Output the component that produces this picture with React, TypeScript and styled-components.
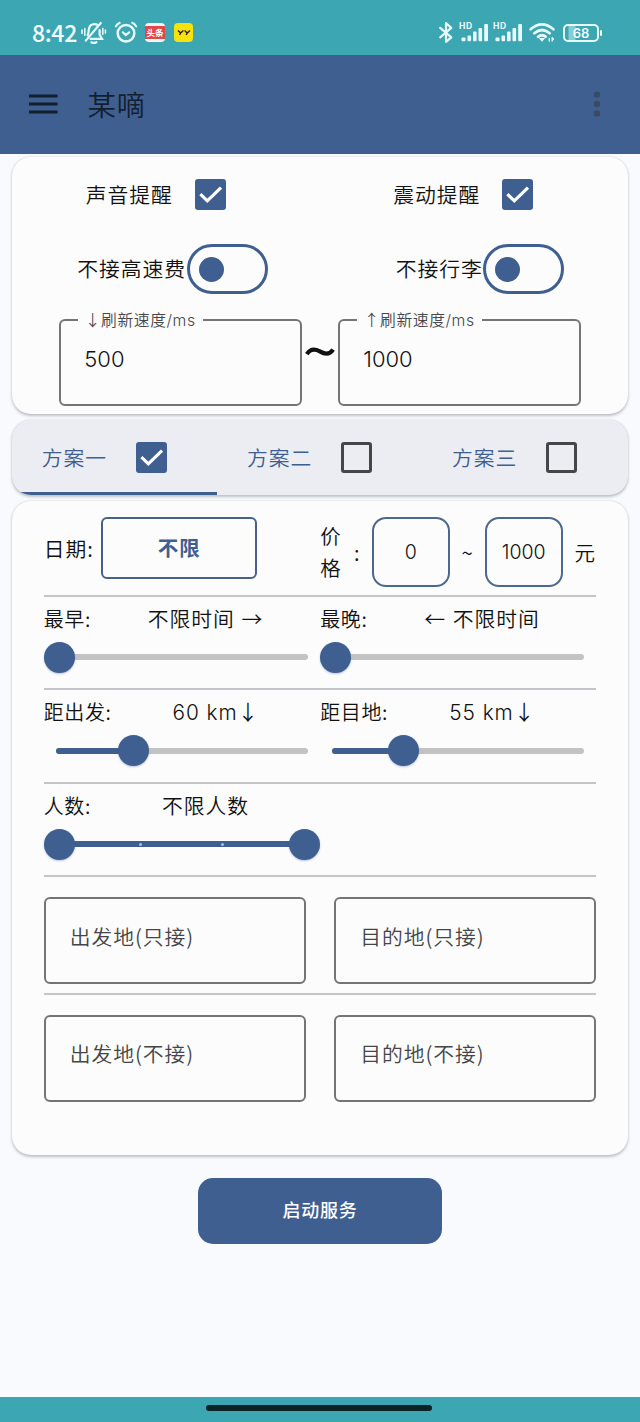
import React from "react";
import styled, { createGlobalStyle, css } from "styled-components";

const blue = "#3e5f90";
const teal = "#3ca6b3";

const GlobalStyle = createGlobalStyle`
  * { box-sizing: border-box; }
  html, body { margin: 0; padding: 0; background: #f9fafd; }
  body {
    font-family: "Noto Sans CJK SC", sans-serif;
    font-weight: 350;
    color: #111;
    -webkit-font-smoothing: antialiased;
  }
`;

const Screen = styled.div`
  width: 640px;
  height: 1422px;
  display: flex;
  flex-direction: column;
  background: #f9fafd;
  overflow: hidden;
`;

const StatusBar = styled.header`
  height: 54.5px;
  flex: none;
  display: flex;
  justify-content: space-between;
  padding: 11px 38px 0 32px;
  background: ${teal};
  color: #f2feff;
`;

const StatusGroup = styled.div`
  display: flex;
  align-items: center;
  height: 43px;
`;

const Clock = styled.span`
  width: 49px;
  padding-bottom: 2px;
  font-family: "Noto Sans CJK SC", sans-serif;
  font-weight: 500;
  font-size: 23px;
  line-height: 24px;
  letter-spacing: -0.3px;
  white-space: nowrap;
`;

const Icon = styled.svg<{ $ml?: number }>`
  display: block;
  flex: none;
  margin-left: ${(p) => p.$ml ?? 0}px;
  overflow: visible;
`;

const NewsBadge = styled.span`
  display: flex;
  align-items: center;
  width: 20px;
  height: 19px;
  margin-left: 8px;
  border-radius: 4px;
  background: #fdf4f3;
  overflow: hidden;
`;

const NewsBand = styled.span`
  width: 20px;
  height: 12.5px;
  background: #e0474b;
  color: #fff;
  font-size: 8.5px;
  font-weight: 700;
  line-height: 12px;
  text-align: center;
  white-space: nowrap;
`;

const YellowBadge = styled.span`
  display: flex;
  align-items: center;
  justify-content: center;
  width: 19px;
  height: 19px;
  margin-left: 9px;
  border-radius: 4px;
  background: #f8e20c;
`;

const Signal = styled.div<{ $ml: number }>`
  position: relative;
  width: 29px;
  height: 19px;
  margin-left: ${(p) => p.$ml}px;
`;

const HdTag = styled.span`
  position: absolute;
  left: -0.5px;
  top: -1px;
  font-family: Inter, sans-serif;
  font-size: 8.5px;
  font-weight: 700;
  line-height: 8px;
  letter-spacing: 0.6px;
`;

const Battery = styled.div`
  display: flex;
  align-items: center;
  margin-left: 8.5px;
`;

const BatteryShell = styled.div`
  width: 36px;
  height: 18px;
  border: 2px solid #e6fbfd;
  border-radius: 5px;
  font-family: Inter, sans-serif;
  font-size: 13px;
  font-weight: 600;
  line-height: 14px;
  text-align: center;
  background: linear-gradient(90deg, #3ca6b3 0 3px, #86ccd5 4px 10px, transparent 11px);
`;

const BatteryNub = styled.div`
  width: 2px;
  height: 6px;
  margin-left: 1px;
  border-radius: 1px;
  background: #e6fbfd;
`;

const AppBar = styled.div`
  height: 99.5px;
  flex: none;
  display: flex;
  align-items: center;
  padding: 0 39px 0 29px;
  background: ${blue};
  color: #121f30;
`;

const Title = styled.h1`
  flex: 1;
  margin: 0 0 0 29.5px;
  font-size: 28.5px;
  font-weight: 350;
  letter-spacing: 0.6px;
  line-height: 40px;
`;

const Card = styled.section`
  width: 615.5px;
  margin: 0 auto;
  flex: none;
  border-radius: 19px;
  background: #fcfcfc;
  box-shadow: 0 1.5px 3px rgba(30, 35, 50, 0.26), 0 0 2px rgba(30, 35, 50, 0.1);
`;

const AlertCard = styled(Card)`
  height: 257px;
  margin-top: 3px;
`;

const Split = styled.div<{ $h: number }>`
  display: grid;
  grid-template-columns: 308px 308px;
  height: ${(p) => p.$h}px;
  align-items: center;
`;

const Option = styled.label<{ $pl: number; $gap: number }>`
  display: flex;
  align-items: center;
  padding-left: ${(p) => p.$pl}px;
  gap: ${(p) => p.$gap}px;
`;

const text = css`
  font-size: 20.8px;
  letter-spacing: 0.95px;
  line-height: 30px;
  white-space: nowrap;
`;

const Label = styled.span`
  ${text}
  padding-bottom: 2px;
`;

const Box = styled.span<{ $on: boolean }>`
  display: flex;
  align-items: center;
  justify-content: center;
  width: 31px;
  height: 31px;
  border-radius: 3px;
  background: ${(p) => (p.$on ? blue : "transparent")};
  border: ${(p) => (p.$on ? "0" : "3px solid #464649")};
`;

const Toggle = styled.span`
  display: flex;
  align-items: center;
  width: 81px;
  height: 50px;
  padding-left: 9.5px;
  border: 3px solid ${blue};
  border-radius: 25px;
`;

const ToggleKnob = styled.span`
  width: 25px;
  height: 25px;
  border-radius: 50%;
  background: ${blue};
`;

const RangeRow = styled.div`
  display: flex;
  padding: 12.5px 0 0 47px;
`;

const Outlined = styled.div<{ $w: number }>`
  position: relative;
  width: ${(p) => p.$w}px;
  height: 87px;
  padding: 21.5px 0 0 24px;
  border: 2px solid #747477;
  border-radius: 6px;
`;

const Legend = styled.span`
  position: absolute;
  left: 17px;
  top: -13px;
  width: 125px;
  padding-left: 6.5px;
  background: #fcfcfc;
  color: #47474b;
  font-family: Inter, "Noto Sans CJK SC", sans-serif;
  font-size: 15.8px;
  letter-spacing: 0.55px;
  line-height: 26px;
  white-space: nowrap;
`;

const Arrow = styled.span`
  font-family: "Noto Sans CJK SC", sans-serif;
  line-height: 1;
`;

const Digits = styled.span`
  display: block;
  margin-left: -1px;
  font-family: Inter, sans-serif;
  font-size: 22px;
  line-height: 34px;
`;

const Wave = styled.div`
  width: 36.5px;
  display: flex;
  justify-content: center;
  padding-top: 27px;
`;

const TabCard = styled(Card)`
  height: 75px;
  margin-top: 6px;
  display: grid;
  grid-template-columns: repeat(3, 1fr);
  background: #ecedf2;
  overflow: hidden;
`;

const Tab = styled.div<{ $active?: boolean }>`
  display: flex;
  align-items: center;
  gap: 29px;
  padding: 3px 0 0 29.5px;
  color: ${blue};
  border-bottom: 3px solid ${(p) => (p.$active ? blue : "transparent")};
`;

const PlanCard = styled(Card)`
  height: 654px;
  margin-top: 6px;
  padding: 0 31.5px;
`;

const Row = styled.div<{ $h: number }>`
  display: flex;
  height: ${(p) => p.$h}px;
  border-bottom: 2px solid #c5c5c9;
`;

const Half = styled.div`
  width: 276.5px;
  flex: none;
`;

const DateHalf = styled(Half)`
  display: flex;
  align-items: flex-start;
  padding-top: 16px;
`;

const SmallLabel = styled.span`
  font-size: 20px;
  letter-spacing: 0.6px;
  line-height: 28px;
  white-space: nowrap;
`;

const DateLabel = styled(SmallLabel)`
  width: 57.5px;
  flex: none;
  padding-top: 17px;
  font-size: 20.8px;
  letter-spacing: 0.9px;
`;

const DateButton = styled.button`
  width: 156px;
  height: 62px;
  padding: 0 0 2px;
  border: 2px solid #47618a;
  border-radius: 6px;
  background: transparent;
  color: ${blue};
  font-family: inherit;
  font-size: 20.5px;
  font-weight: 700;
  letter-spacing: 0.9px;
`;

const PriceHalf = styled(Half)`
  display: flex;
  align-items: center;
  height: 70px;
  margin-top: 16px;
`;

const Stacked = styled.span`
  width: 32px;
  flex: none;
  padding: 0 11px 2px 0;
  font-size: 20.5px;
  line-height: 32px;
  overflow-wrap: anywhere;
`;

const PriceBox = styled.span`
  width: 78px;
  height: 70px;
  flex: none;
  border: 2px solid #4c688f;
  border-radius: 14px;
  font-family: Inter, sans-serif;
  font-size: 19.5px;
  line-height: 67px;
  text-align: center;
`;

const Glue = styled.span<{ $w: number }>`
  width: ${(p) => p.$w}px;
  flex: none;
  padding-bottom: 1px;
  font-size: 20.5px;
  line-height: 30px;
  text-align: center;
`;

const SliderHead = styled.div`
  display: flex;
  padding-top: 8px;
  height: 44.5px;
`;

const Value = styled.span`
  ${text}
  flex: 1;
  text-align: center;
  font-family: Inter, "Noto Sans CJK SC", sans-serif;
`;

const Track = styled.div`
  position: relative;
  width: 252px;
  height: 6px;
  margin: 13px 0 0 12px;
  border-radius: 3px;
  background: #c3c3c3;
`;

const Fill = styled.div`
  height: 6px;
  border-radius: 3px;
  background: ${blue};
`;

const Thumb = styled.span`
  position: absolute;
  top: -12.5px;
  width: 31px;
  height: 31px;
  margin-left: -15.5px;
  border-radius: 50%;
  background: ${blue};
  box-shadow: 0 1px 2px rgba(62, 95, 180, 0.35);
`;

const Tick = styled.span`
  position: absolute;
  top: 1.5px;
  width: 3px;
  height: 3px;
  border-radius: 50%;
  background: #a9bfe6;
`;

const FieldRow = styled.div<{ $h: number; $line?: boolean }>`
  display: flex;
  justify-content: space-between;
  height: ${(p) => p.$h}px;
  padding-top: 20px;
  border-bottom: ${(p) => (p.$line ? "2px solid #c5c5c9" : "0")};
`;

const Placeholder = styled.span`
  ${text}
  display: block;
  color: #454548;
`;

const StartButton = styled.button`
  width: 244px;
  height: 66px;
  margin: 22.5px auto 0;
  padding: 0 0 3px;
  flex: none;
  border: 0;
  border-radius: 15px;
  background: ${blue};
  color: #fff;
  font-family: inherit;
  font-size: 18px;
  font-weight: 500;
  letter-spacing: 0.7px;
`;

const NavBar = styled.footer`
  height: 25px;
  flex: none;
  margin-top: auto;
  padding: 8px 0 0 206px;
  background: ${teal};
`;

const HomePill = styled.div`
  width: 226px;
  height: 6px;
  border-radius: 3px;
  background: #0b2226;
`;

const Check = ({ on }: { on: boolean }) => (
  <Box $on={on}>
    {on && (
      <Icon width="31" height="31" viewBox="0 0 31 31" fill="none" stroke="#fff" strokeWidth="3.2">
        <path d="M5.4 15.2 L12.3 21.8 L26 8.6" />
      </Icon>
    )}
  </Box>
);

const SignalBars = ({ ml }: { ml: number }) => (
  <Signal $ml={ml}>
    <Icon width="29" height="19" viewBox="0 0 29 19" fill="#e6fbfd">
      <rect x="1.5" y="14.5" width="4" height="3.8" rx="1" />
      <rect x="7.5" y="12.5" width="3.6" height="5.8" rx="1" />
      <rect x="13" y="8.5" width="3.6" height="9.8" rx="1" />
      <rect x="18.5" y="5" width="3.6" height="13.3" rx="1" />
      <rect x="24.2" y="1" width="3.8" height="17.3" rx="1" />
    </Icon>
    <HdTag>HD</HdTag>
  </Signal>
);

type SliderProps = {
  label: string;
  value: React.ReactNode;
  from?: number;
  at: number;
  ticks?: number[];
};

const SliderCell = ({ label, value, from, at, ticks = [] }: SliderProps) => (
  <Half>
    <SliderHead>
      <SmallLabel>{label}</SmallLabel>
      <Value>{value}</Value>
    </SliderHead>
    <Track>
      <Fill style={{ width: at }} />
      {ticks.map((t) => (
        <Tick key={t} style={{ left: t }} />
      ))}
      {from !== undefined && <Thumb style={{ left: from }} />}
      <Thumb style={{ left: at }} />
    </Track>
  </Half>
);

export default function App() {
  return (
    <Screen>
      <GlobalStyle />
      <StatusBar>
        <StatusGroup>
          <Clock>8:42</Clock>
          <Icon width="25" height="22" viewBox="0 0 25 22" fill="none" stroke="#e6fbfd" strokeWidth="2.2" strokeLinecap="round">
            <path d="M6.6 13.4C7.6 11.6 7.4 10 7.8 7.6C8.4 3.8 11 2.2 13.6 2.2C15 2.2 16 2.6 16.8 3.2" />
            <path d="M18.6 8V12.6L21 16.8H9.5" />
            <path d="M19.8 1L4.8 18.6" />
            <path d="M10.4 20.2Q12.8 21.6 15.4 20.2" />
            <path d="M1 8V11.5M3.8 6.5V13.2M21.8 6.5V12.2M24.4 8V11" strokeWidth="1.6" />
          </Icon>
          <Icon $ml={9} width="22" height="21" viewBox="0 0 22 21" fill="none" stroke="#e6fbfd" strokeWidth="2.5" strokeLinecap="round">
            <circle cx="11" cy="11.3" r="8.3" />
            <path d="M7.8 10.3L10.8 13L14.2 10.3" strokeWidth="2.2" />
            <path d="M0.8 4.4Q2.2 1.8 4.8 0.8M17.2 0.8Q19.8 1.8 21.2 4.4" strokeWidth="2" />
          </Icon>
          <NewsBadge>
            <NewsBand>头条</NewsBand>
          </NewsBadge>
          <YellowBadge>
            <Icon width="14" height="8" viewBox="0 0 14 8" fill="none" stroke="#222" strokeWidth="1.4">
              <path d="M1 1.5L3.6 4L6.4 1.5M3.6 4L2.6 6M7.6 1.5L10.2 4L13 1.5M10.2 4L9.2 6" />
            </Icon>
          </YellowBadge>
        </StatusGroup>
        <StatusGroup>
          <Icon width="14" height="21" viewBox="0 0 14 21" fill="none" stroke="#e6fbfd" strokeWidth="2.2" strokeLinejoin="round" strokeLinecap="round">
            <path d="M1.2 5.8L12.3 15.3L7 19.8V1.2L12.3 5.8L1.2 15.3" />
          </Icon>
          <SignalBars ml={7} />
          <SignalBars ml={5} />
          <Icon $ml={6} width="26" height="19" viewBox="0 0 26 19" fill="none" stroke="#e6fbfd" strokeWidth="2.7" strokeLinecap="round">
            <path d="M1.6 6.3Q13 -3.6 24.4 6.3" />
            <path d="M5.3 10.2Q13 3.8 20.7 10.2" />
            <path d="M9 13.8Q13 10.8 16.6 13.6" />
            <path d="M11.5 15.8H14.5L13 17.6Z" fill="#e6fbfd" strokeWidth="1.6" />
            <path d="M20.3 18V15.5M23.2 14.5V18M24.4 15.6V16.4" strokeWidth="1.4" />
          </Icon>
          <Battery>
            <BatteryShell>68</BatteryShell>
            <BatteryNub />
          </Battery>
        </StatusGroup>
      </StatusBar>

      <AppBar>
        <Icon width="29" height="20" viewBox="0 0 29 20" fill="#10202e">
          <rect y="0.5" width="28.5" height="3" />
          <rect y="8.5" width="28.5" height="3" />
          <rect y="16.5" width="28.5" height="3" />
        </Icon>
        <Title>某嘀</Title>
        <Icon width="8" height="26" viewBox="0 0 8 26" fill="#3a4a60">
          <circle cx="4" cy="3.6" r="3.2" />
          <circle cx="4" cy="13" r="3.2" />
          <circle cx="4" cy="22.4" r="3.2" />
        </Icon>
      </AppBar>

      <AlertCard>
        <Split $h={75}>
          <Option $pl={73.5} $gap={22}>
            <Label>声音提醒</Label>
            <Check on />
          </Option>
          <Option $pl={73} $gap={22}>
            <Label>震动提醒</Label>
            <Check on />
          </Option>
        </Split>
        <Split $h={74}>
          <Option $pl={65} $gap={1}>
            <Label>不接高速费</Label>
            <Toggle>
              <ToggleKnob />
            </Toggle>
          </Option>
          <Option $pl={75.5} $gap={0}>
            <Label>不接行李</Label>
            <Toggle>
              <ToggleKnob />
            </Toggle>
          </Option>
        </Split>
        <RangeRow>
          <Outlined $w={242.5}>
            <Legend>
              <Arrow>↓</Arrow>刷新速度/ms
            </Legend>
            <Digits>500</Digits>
          </Outlined>
          <Wave>
            <Icon width="29" height="12" viewBox="0 0 29 12" fill="none" stroke="#111" strokeWidth="4.2">
              <path d="M0.8 8.2C4.5 2.4 9 2.8 13.8 5.4C18.5 8.2 23.5 8.8 27.1 3.6" />
            </Icon>
          </Wave>
          <Outlined $w={243}>
            <Legend>
              <Arrow>↑</Arrow>刷新速度/ms
            </Legend>
            <Digits>1000</Digits>
          </Outlined>
        </RangeRow>
      </AlertCard>

      <TabCard>
        <Tab $active>
          <Label>方案一</Label>
          <Check on />
        </Tab>
        <Tab>
          <Label>方案二</Label>
          <Check on={false} />
        </Tab>
        <Tab>
          <Label>方案三</Label>
          <Check on={false} />
        </Tab>
      </TabCard>

      <PlanCard>
        <Row $h={95.5}>
          <DateHalf>
            <DateLabel>日期:</DateLabel>
            <DateButton>不限</DateButton>
          </DateHalf>
          <PriceHalf>
            <Stacked>价格</Stacked>
            <Glue $w={9}>:</Glue>
            <Glue $w={10.5} />
            <PriceBox>0</PriceBox>
            <Glue $w={35}>~</Glue>
            <PriceBox>1000</PriceBox>
            <Glue $w={44}>元</Glue>
          </PriceHalf>
        </Row>
        <Row $h={93.5}>
          <SliderCell label="最早:" value={<>不限时间 <Arrow>→</Arrow></>} at={3.5} />
          <SliderCell label="最晚:" value={<><Arrow>←</Arrow> 不限时间</>} at={3.5} />
        </Row>
        <Row $h={93.5}>
          <SliderCell label="距出发:" value={<>60 km<Arrow>↓</Arrow></>} at={77.5} />
          <SliderCell label="距目地:" value={<>55 km<Arrow>↓</Arrow></>} at={71} />
        </Row>
        <Row $h={93.5}>
          <SliderCell label="人数:" value="不限人数" from={3.5} at={248.5} ticks={[83.5, 165.5]} />
        </Row>
        <FieldRow $h={117.5} $line>
          <Outlined $w={262}>
            <Placeholder>出发地(只接)</Placeholder>
          </Outlined>
          <Outlined $w={262}>
            <Placeholder>目的地(只接)</Placeholder>
          </Outlined>
        </FieldRow>
        <FieldRow $h={108}>
          <Outlined $w={262}>
            <Placeholder>出发地(不接)</Placeholder>
          </Outlined>
          <Outlined $w={262}>
            <Placeholder>目的地(不接)</Placeholder>
          </Outlined>
        </FieldRow>
      </PlanCard>

      <StartButton>启动服务</StartButton>

      <NavBar>
        <HomePill />
      </NavBar>
    </Screen>
  );
}
